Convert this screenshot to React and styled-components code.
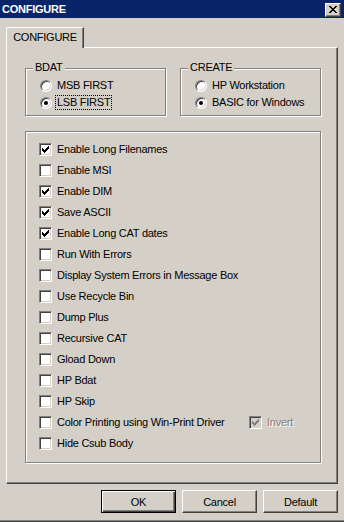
import React from "react";
import styled, { createGlobalStyle } from "styled-components";

const GlobalStyle = createGlobalStyle`
  body {
    margin: 0;
    background: #d4d0c8;
    font-family: "Liberation Sans", Arial, sans-serif;
    font-size: 11px;
    letter-spacing: -0.25px;
    color: #000;
  }
`;

// whole dialog window
const Dialog = styled.div`
  width: 344px;
  height: 522px;
  box-sizing: border-box;
  background: #d4d0c8;
  display: flex;
  flex-direction: column;
  border-bottom: 1px solid #404040;
  box-shadow: inset 0 -1px #808080;
`;

const TitleBar = styled.div`
  height: 18px;
  flex: 0 0 18px;
  background: #0a246a;
  color: #fff;
  font-weight: bold;
  display: flex;
  align-items: center;
  justify-content: space-between;
  padding: 0 3px 0 2px;
`;

const CloseButton = styled.div`
  width: 16px;
  height: 14px;
  box-sizing: border-box;
  background: #d4d0c8;
  border: 1px solid;
  border-color: #fff #404040 #404040 #fff;
  box-shadow: inset -1px -1px #808080;
  display: flex;
  align-items: center;
  justify-content: center;
  margin-top: 1px;
`;

const Body = styled.div`
  display: flex;
  flex-direction: column;
  padding: 9px 6px 0 6px;
`;

const TabStrip = styled.div`
  display: flex;
  height: 20px;
`;

const Tab = styled.div`
  position: relative;
  z-index: 1;
  width: 78px;
  height: 21px;
  box-sizing: border-box;
  background: #d4d0c8;
  border-top: 1px solid #fff;
  border-left: 1px solid #fff;
  border-right: 1px solid #404040;
  border-top-left-radius: 2px;
  box-shadow: inset -1px 0 #808080;
  display: flex;
  align-items: center;
  justify-content: center;
  padding-bottom: 2px;
`;

const Panel = styled.div`
  height: 437px;
  box-sizing: border-box;
  border: 1px solid;
  border-color: #fff #404040 #404040 #fff;
  box-shadow: inset -1px -1px #808080;
  padding: 20px 0 0 18px;
  display: flex;
  flex-direction: column;
`;

const TopRow = styled.div`
  display: flex;
  gap: 14px;
`;

// etched group box
const Group = styled.div`
  position: relative;
  width: ${(p) => p.width}px;
  height: ${(p) => p.height}px;
  box-sizing: border-box;
  border: 1px solid #808080;
  box-shadow: inset 1px 1px #fff, 1px 1px #fff;
  padding: ${(p) => p.pad};
  margin-top: ${(p) => p.mt || 0}px;
  display: flex;
  flex-direction: column;
`;

const Legend = styled.span`
  position: absolute;
  left: 7px;
  top: -8px;
  line-height: 13px;
  padding: 0 2px;
  background: #d4d0c8;
`;

const RadioRow = styled.div`
  height: 17px;
  display: flex;
  align-items: center;
  gap: 5px;
`;

const RadioCircle = styled.div`
  width: 12px;
  height: 12px;
  box-sizing: border-box;
  border-radius: 50%;
  border: 1px solid;
  border-color: #808080 #fff #fff #808080;
  box-shadow: inset 1px 1px #404040, inset -1px -1px #d4d0c8;
  background: #fff;
  display: flex;
  align-items: center;
  justify-content: center;
`;

const RadioDot = styled.div`
  width: 4px;
  height: 4px;
  border-radius: 50%;
  background: #000;
`;

const Label = styled.span`
  line-height: 13px;
  padding: 0 1px;
  margin-left: -1px;
  outline: ${(p) => (p.focused ? "1px dotted #000" : "none")};
  color: ${(p) => (p.disabled ? "#808080" : "#000")};
  text-shadow: ${(p) => (p.disabled ? "1px 1px #fff" : "none")};
  white-space: nowrap;
`;

const CheckRow = styled.div`
  height: 21px;
  display: flex;
  align-items: center;
`;

const Option = styled.div`
  display: flex;
  align-items: center;
  gap: 5px;
  flex: ${(p) => (p.fixed ? `0 0 ${p.fixed}px` : "0 0 auto")};
`;

const Box = styled.div`
  width: 13px;
  height: 13px;
  box-sizing: border-box;
  border: 1px solid;
  border-color: #808080 #fff #fff #808080;
  box-shadow: inset 1px 1px #404040, inset -1px -1px #d4d0c8;
  background: ${(p) => (p.disabled ? "#d4d0c8" : "#fff")};
  display: flex;
  align-items: center;
  justify-content: center;
`;

const ButtonRow = styled.div`
  display: flex;
  justify-content: flex-end;
  gap: 6px;
  padding-top: 6px;
`;

const Button = styled.div`
  width: 75px;
  height: 23px;
  box-sizing: border-box;
  border: 1px solid;
  border-color: ${(p) =>
    p.primary ? "#000" : "#fff #404040 #404040 #fff"};
  box-shadow: ${(p) =>
    p.primary
      ? "inset 1px 1px #fff, inset -1px -1px #404040, inset -2px -2px #808080"
      : "inset -1px -1px #808080"};
  display: flex;
  align-items: center;
  justify-content: center;
`;

const Check = ({ color = "#000" }) => (
  <svg width="7" height="7" viewBox="0 0 7 7" shapeRendering="crispEdges">
    <path
      fill={color}
      d="M6 0h1v3h-1zM5 1h1v3h-1zM4 2h1v3h-1zM0 2h1v3h-1zM1 3h1v3h-1zM2 4h1v3h-1zM3 3h1v3h-1z"
    />
  </svg>
);

const CheckBox = ({ checked, disabled, label }) => (
  <>
    <Box disabled={disabled}>{checked && <Check color={disabled ? "#808080" : "#000"} />}</Box>
    <Label disabled={disabled}>{label}</Label>
  </>
);

const Radio = ({ checked, label, focused }) => (
  <RadioRow>
    <RadioCircle>{checked && <RadioDot />}</RadioCircle>
    <Label focused={focused}>{label}</Label>
  </RadioRow>
);

const options = [
  ["Enable Long Filenames", true],
  ["Enable MSI", false],
  ["Enable DIM", true],
  ["Save ASCII", true],
  ["Enable Long CAT dates", true],
  ["Run With Errors", false],
  ["Display System Errors in Message Box", false],
  ["Use Recycle Bin", false],
  ["Dump Plus", false],
  ["Recursive CAT", false],
  ["Gload Down", false],
  ["HP Bdat", false],
  ["HP Skip", false],
  ["Color Printing using Win-Print Driver", false],
  ["Hide Csub Body", false],
];

export default function App() {
  return (
    <Dialog>
      <GlobalStyle />
      <TitleBar>
        <span>CONFIGURE</span>
        <CloseButton>
          <svg width="8" height="7" viewBox="0 0 8 7" shapeRendering="crispEdges">
            <path
              fill="#000"
              d="M0 0h2v1h-2zM6 0h2v1h-2zM1 1h2v1h-2zM5 1h2v1h-2zM2 2h4v1h-4zM3 3h2v1h-2zM2 4h4v1h-4zM1 5h2v1h-2zM5 5h2v1h-2zM0 6h2v1h-2zM6 6h2v1h-2z"
            />
          </svg>
        </CloseButton>
      </TitleBar>
      <Body>
        <TabStrip>
          <Tab>CONFIGURE</Tab>
        </TabStrip>
        <Panel>
          <TopRow>
            <Group width={141} height={48} pad="8px 0 0 14px">
              <Legend>BDAT</Legend>
              <Radio label="MSB FIRST" />
              <Radio label="LSB FIRST" checked focused />
            </Group>
            <Group width={141} height={48} pad="8px 0 0 14px">
              <Legend>CREATE</Legend>
              <Radio label="HP Workstation" />
              <Radio label="BASIC for Windows" checked />
            </Group>
          </TopRow>
          <Group width={296} height={332} pad="7px 0 8px 13px" mt={15}>
            {options.map(([label, checked]) => (
              <CheckRow key={label}>
                <Option fixed={label.startsWith("Color") ? 210 : 0}>
                  <CheckBox checked={checked} label={label} />
                </Option>
                {label.startsWith("Color") && (
                  <Option>
                    <CheckBox checked disabled label="Invert" />
                  </Option>
                )}
              </CheckRow>
            ))}
          </Group>
        </Panel>
        <ButtonRow>
          <Button primary>OK</Button>
          <Button>Cancel</Button>
          <Button>Default</Button>
        </ButtonRow>
      </Body>
    </Dialog>
  );
}
